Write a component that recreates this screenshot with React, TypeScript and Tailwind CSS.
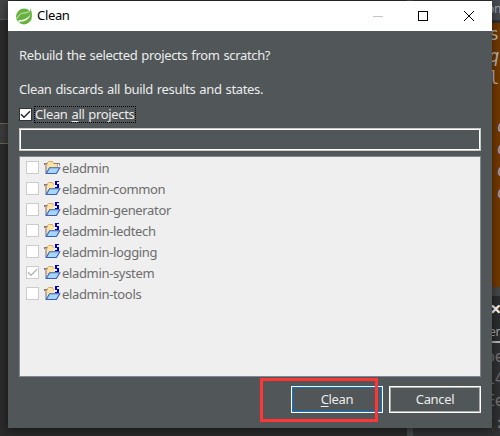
import React from "react";

const projects = [
  { name: "eladmin", spring: false, checked: false },
  { name: "eladmin-common", spring: true, checked: false },
  { name: "eladmin-generator", spring: true, checked: false },
  { name: "eladmin-ledtech", spring: true, checked: false },
  { name: "eladmin-logging", spring: true, checked: false },
  { name: "eladmin-system", spring: true, checked: true },
  { name: "eladmin-tools", spring: true, checked: false },
];

function SpringLogo() {
  return (
    <svg width="17" height="17" viewBox="0 0 17 17" className="shrink-0">
      <circle cx="8" cy="8.5" r="7.9" fill="#68b33f" />
      <path d="M14.4 0.6C15.9 3.5 16.2 6.5 15.4 9.5L13.6 4.4Z" fill="#68b33f" />
      <path d="M1.6 10.4C2.2 6.2 5.6 5.2 9 4.9C11.6 4.6 13.4 3.9 14.4 2.2" fill="none" stroke="#e4f2dc" strokeWidth="0.8" />
      <path d="M1.6 12.4C7.5 12.3 11.6 10.8 14.8 6C13.4 10.9 9.4 13.6 3.6 13.8Z" fill="#fff" />
      <circle cx="3.2" cy="13.8" r="0.8" fill="#fff" />
    </svg>
  );
}

function FolderIcon({ spring }: { spring: boolean }) {
  return (
    <svg width="17" height="17" viewBox="0 0 17 17" className="ml-[5px] shrink-0">
      <path d="M3 5H4V3.5L5 2.5H8.5L9.5 4.5H13.5V10H5L3 14Z" fill="#fce5a4" />
      <path d="M3.5 5.5V3.5L4.5 2.5H8.5L9.5 4.5H13.5V9" fill="none" stroke="#dba95f" />
      <path d="M0.5 6V4.5H3M2 5V14" fill="none" stroke="#86747a" strokeWidth="1.1" />
      {!spring && <path d="M10 4.5H15.5V6.5" fill="none" stroke="#86747a" />}
      <path d="M5.6 8.8H15.8L12.4 14.5H2.2Z" fill="#a6d6f8" stroke="#3b5fb4" strokeWidth="1.1" />
      {spring && (
        <g shapeRendering="crispEdges">
          <path d="M10 0H16V8H10Z" fill="#efefef" />
          <path d="M11 1H15V2H13V4H15V8H11V7H13V5H11Z" fill="#0000c8" />
        </g>
      )}
    </svg>
  );
}

function Check({ color }: { color: string }) {
  return (
    <svg width="11" height="11" viewBox="0 0 11 11">
      <path d="M1 5.3L4 8.3L10 2.3" fill="none" stroke={color} strokeWidth="1.4" />
    </svg>
  );
}

export default function App() {
  return (
    <div className="relative h-[436px] w-[500px] overflow-hidden bg-[#2b2b2b] font-['Noto_Sans','Open_Sans',sans-serif] text-[13px] tracking-[-0.34px] [word-spacing:0.85px]">
      <div className="flex h-full justify-between">
        <div className="flex w-2 flex-col">
          <div className="h-5 border-b border-[#555] bg-[#434547]" />
          <div className="mt-[103px] h-[21px] border-y border-[#6b6b53] bg-[#3c3c3c]" />
        </div>
        <div className="flex w-[93px]">
          <div className="w-[6px] bg-[#45494c]" />
          <div className="flex flex-1 flex-col items-end bg-[#303132]">
            <div className="h-5 w-2 overflow-hidden bg-[#484b4f] text-[12px] leading-[18px] text-[#a8adb5]"><span className="-ml-[5px]">on</span></div>
            <div className="mt-[3px] h-[264px] w-2 overflow-hidden bg-[#743a00] pt-[1px] font-['DejaVu_Sans_Mono',monospace] text-[17px] text-[#b8bcc0]">
              <div className="h-[22px] leading-[21px]">
                <span className="-ml-[3px]">s</span>
              </div>
              <div className="h-[21px] italic leading-[21px]">
                <span className="-ml-[3px]">q</span>
              </div>
              <div className="h-[21px] leading-[23px]">
                <span className="-ml-[3px]">l</span>
              </div>
              <div className="mt-[27px] pl-[5px] italic leading-[22px] text-[#aaa5bd]">
                <div>d</div><div>d</div><div>d</div><div>d</div>
              </div>
            </div>
            <div className="h-[9px] w-2 bg-[#45484a]" />
            <div className="h-[47px] w-2 overflow-hidden border-b-2 border-[#b8b8b8] bg-[#2b2d2f] text-[12px] text-[#aaa]">
              <div className="h-[28px] text-[20px] font-bold leading-[26px] text-white"><span className="-ml-[2px]">×</span></div>
              <div className="leading-[16px]"><span className="-ml-[3px]">en</span></div>
            </div>
            <div className="w-2 overflow-hidden pt-[3px] font-['DejaVu_Sans_Mono',monospace] text-[15px] leading-[22px] text-[#777]">
              <div><span className="-ml-[6px]">oe</span></div>
              <div><span className="-ml-[6px]">14</span></div>
              <div><span className="-ml-[6px]">Ee</span></div>
              <div><span className="-ml-[6px]">(:</span></div>
            </div>
          </div>
        </div>
      </div>

      <div className="absolute left-2 top-px flex h-[427px] w-[484px] flex-col bg-[#515658] text-[#ebeced] shadow-[0_2px_10px_rgba(0,0,0,0.55)]">
        <header className="flex h-[30px] items-center bg-white pl-2 text-black">
          <SpringLogo />
          <span className="ml-1 pb-px">Clean</span>
          <svg width="104" height="12" viewBox="0 0 104 12" className="ml-auto mr-[16px]" fill="none" shapeRendering="crispEdges">
            <path d="M1 6.5H11" stroke="#c5c5c5" />
            <path d="M46.5 1.5H55.5V10.5H46.5Z" stroke="#000" />
            <path d="M92 1L102 11M102 1L92 11" stroke="#000" shapeRendering="auto" />
          </svg>
        </header>

        <main className="flex flex-1 flex-col px-[11px]">
          <p className="mt-[14px] h-[20px] whitespace-nowrap leading-[20px]">Rebuild the selected projects from scratch?</p>
          <p className="mt-[14px] h-[20px] whitespace-nowrap leading-[20px]">Clean discards all build results and states.</p>
          <div className="mt-[7px] flex h-[17px] items-center">
            <span className="flex h-[13px] w-[13px] items-center justify-center border border-[#333] bg-white">
              <Check color="#222" />
            </span>
            <span className="ml-[2px] h-[17px] w-[102px] whitespace-nowrap border border-dotted border-black leading-[15px]">
              Clean <u className="underline-offset-2">a</u>ll projects
            </span>
          </div>
          <div className="mt-[5px] h-[23px] border border-[#c8c8c4] p-0">
            <div className="h-full border border-white" />
          </div>
          <ul className="mt-[5px] h-[221px] border border-[#828790] bg-[#efefef] text-[#6d6d6d]">
            {projects.map((p) => (
              <li key={p.name} className="flex h-[21px] items-center pl-[6px]">
                <span className="flex h-[13px] w-[13px] items-center justify-center border border-[#ccc] bg-white">
                  {p.checked && <Check color="#b5b5b5" />}
                </span>
                <FolderIcon spring={p.spring} />
                <span className="ml-[1px] pt-[2px]">{p.name}</span>
              </li>
            ))}
          </ul>
          <footer className="mt-[9px] flex justify-end gap-[6px]">
            <button className="h-[27px] w-[92px] border border-white">
              <span className="flex h-full items-center justify-center border border-[#0078d7]"><span><u className="underline-offset-2">C</u>lean</span></span>
            </button>
            <button className="h-[27px] w-[92px] border border-white">
              <span className="flex h-full items-center justify-center border border-[#adadad]">Cancel</span>
            </button>
          </footer>
        </main>
      </div>

      <div className="absolute left-[260px] top-[378px] h-[44px] w-[118px] border-[3px] border-[#ff3636]" />
    </div>
  );
}
